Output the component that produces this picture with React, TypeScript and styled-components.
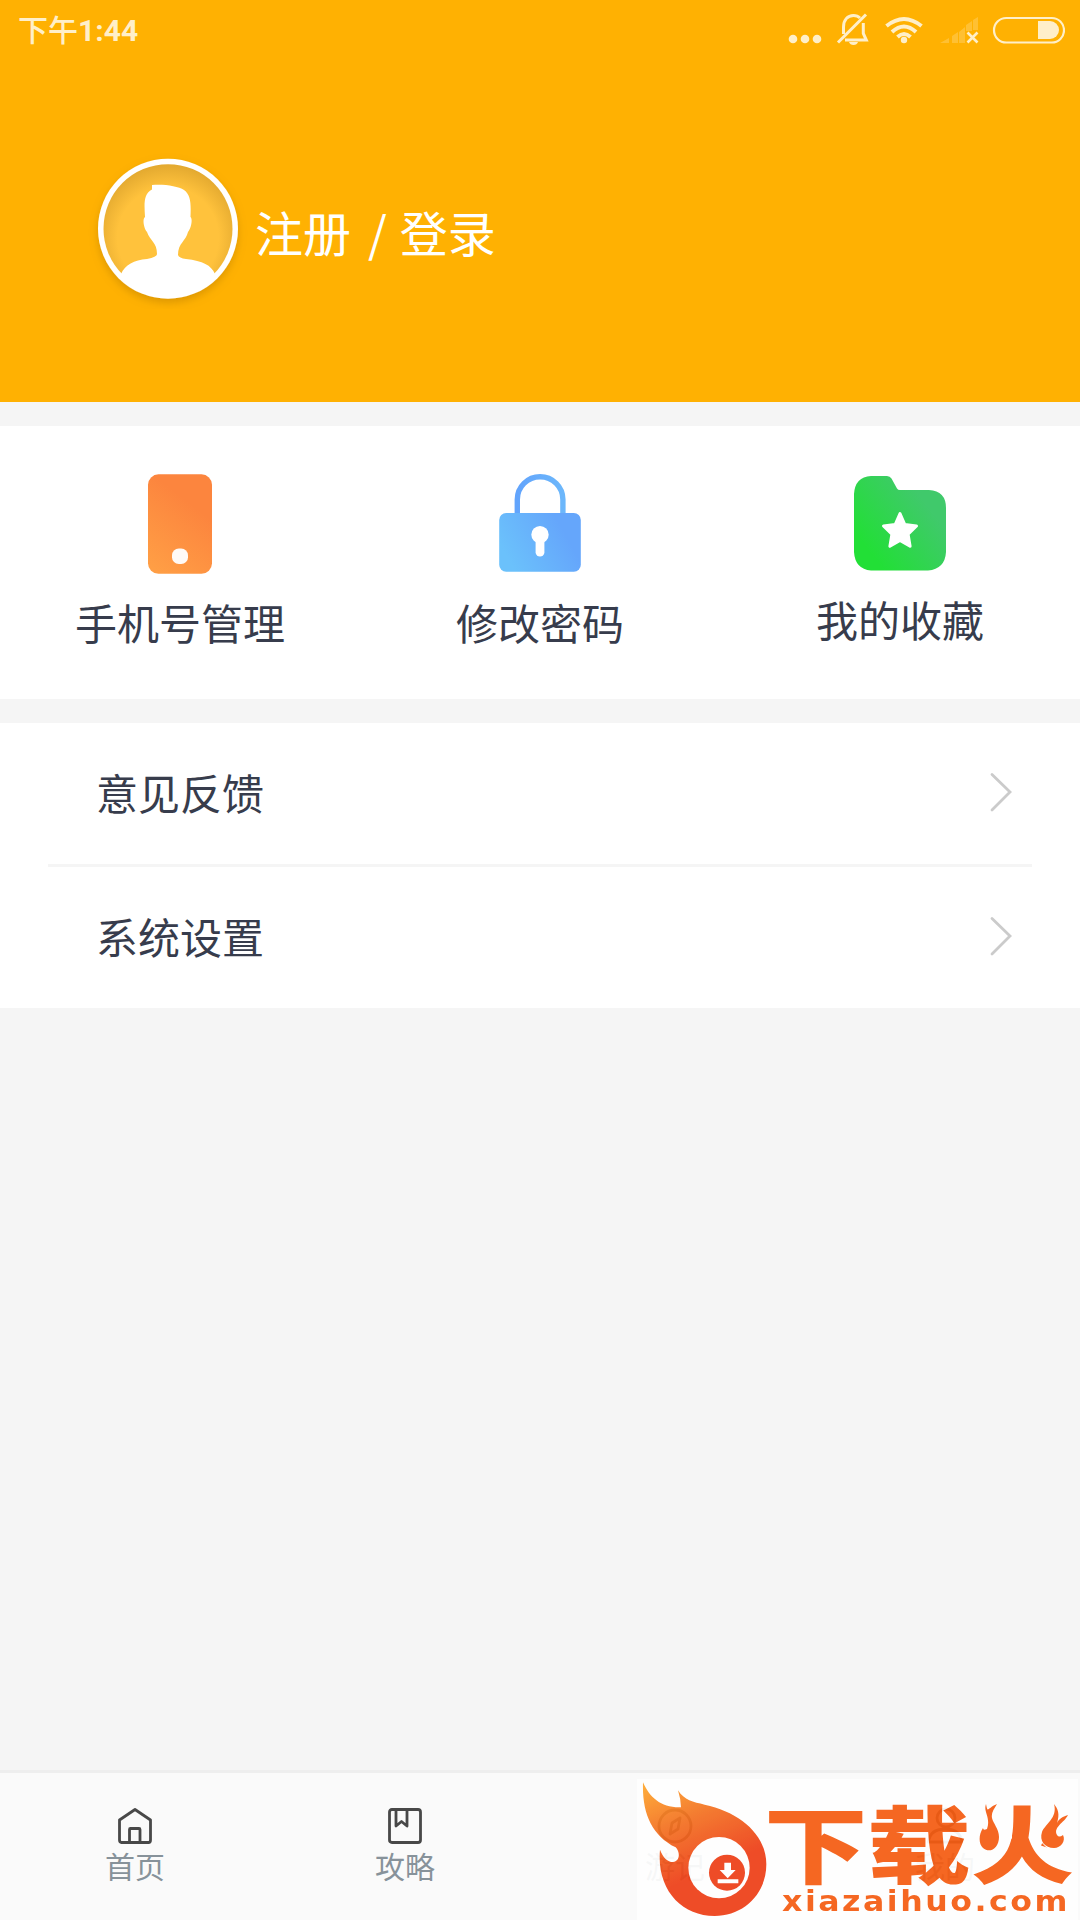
import React from "react";
import styled, { createGlobalStyle } from "styled-components";

const Global = createGlobalStyle`
  * { box-sizing: border-box; }
  body { margin: 0; background: #f5f5f5; font-family: "Noto Sans CJK SC", sans-serif; }
  svg { display: block; flex: none; }
`;

const Screen = styled.div`
  width: 1080px;
  height: 1920px;
  display: flex;
  flex-direction: column;
  background: #f5f5f5;
  overflow: hidden;
`;

const Header = styled.header`
  height: 402px;
  background: #ffb102;
`;

const StatusBar = styled.div`
  height: 60px;
  padding: 0 15px 0 18px;
  display: flex;
  justify-content: space-between;
  align-items: center;
`;

const Clock = styled.span`
  padding-top: 1px;
  font: 500 30px/60px Roboto, "Noto Sans CJK SC", sans-serif;
  color: #ffefc9;
`;

const ClockDigits = styled.span`
  font-weight: 700;
`;

const Profile = styled.div`
  display: flex;
  align-items: center;
  padding: 89px 0 0 88px;
`;

const LoginText = styled.span`
  margin: 4px 0 0 7px;
  font-size: 48px;
  line-height: 70px;
  color: #fff;
`;

const Slash = styled.span`
  margin: 0 13px 0 17px;
`;

const Shortcuts = styled.section`
  display: grid;
  grid-template-columns: repeat(3, 1fr);
  height: 273px;
  margin: 24px 0;
  background: #fff;
`;

const Shortcut = styled.div<{ $gap: number }>`
  display: flex;
  flex-direction: column;
  align-items: center;
  padding-top: 42px;
  gap: ${(p) => p.$gap}px;
  font-size: 42px;
  line-height: 60px;
  color: #373c4c;
`;

const List = styled.section`
  background: #fff;
  padding: 0 48px;
`;

const Row = styled.div<{ $divided?: boolean }>`
  display: flex;
  align-items: center;
  justify-content: space-between;
  height: ${(p) => (p.$divided ? 144 : 141)}px;
  padding: 0 17px 4px 48px;
  border-bottom: ${(p) => (p.$divided ? "3px solid #f5f5f5" : "none")};
  font-size: 42px;
  line-height: 60px;
  color: #373c4c;
`;

const TabBar = styled.nav`
  position: relative;
  margin-top: auto;
  height: 150px;
  border-top: 3px solid #eeeeee;
  background: #fafafa;
  display: grid;
  grid-template-columns: repeat(4, 1fr);
`;

const Tab = styled.div`
  display: flex;
  flex-direction: column;
  align-items: center;
  padding-top: 34px;
  font-size: 30px;
  line-height: 36px;
  color: #87929a;
`;

const Watermark = styled.div`
  position: absolute;
  left: 637px;
  top: 6px;
  width: 441px;
  height: 142px;
  display: flex;
  background: #fff;
  opacity: 0.93;
  color: #f55c12;
  overflow: hidden;
`;

const Brand = styled.div`
  display: flex;
  flex-direction: column;
  width: 311px;
  padding-top: 16px;
`;

const BrandName = styled.div`
  height: 91px;
  width: 252px;
  margin-left: -3px;
  font-size: 84px;
  font-weight: 900;
  line-height: 91px;
  white-space: nowrap;
  transform: scaleX(1.23);
  transform-origin: 0 0;
`;

const Flames = styled.svg`
  position: absolute;
  left: 337px;
  top: 22px;
`;

const Domain = styled.div`
  padding-left: 15px;
  font: bold 29px/30px "DejaVu Sans", sans-serif;
  letter-spacing: 2.3px;
  white-space: nowrap;
  transform: scaleX(1.09);
  transform-origin: 15px 0;
`;

const StatusIcons = () => (
  <svg width="290" height="60" viewBox="775 0 290 60" fill="#ffefc9">
    <circle cx="793" cy="39" r="4.300" />
    <circle cx="805" cy="39" r="4.300" />
    <circle cx="817" cy="39" r="4.300" />
    <g fill="none" stroke="#ffefc9" strokeWidth="3">
      <path d="M843.500 34V27c0-7 4-11.500 10-11.500 2.500 0 5 1 6.500 2.500M863.300 23v10.500l3 6.500H845" />
      <path d="M838 42.500L866 14.500" />
      <path d="M886.500 26Q904 12 921.500 26M892 32Q904 21 916 32M897.500 37Q904 31 910.500 37" strokeWidth="4" />
      <rect x="994" y="18" width="70" height="24.500" rx="12.250" strokeWidth="2.200" />
      <path d="M967.500 32.500l10 10m0-10l-10 10" strokeWidth="2.600" />
    </g>
    <path d="M849 42h9q-1 3-4.500 3t-4.500-3z" />
    <circle cx="904" cy="40" r="3.200" />
    <path d="M940 43l9-5v5zM952 36l6-4v11h-6zM959 32l6-5v16h-6zM966 25l6-4v10h-6zM973 20l5-3v13h-5z" opacity=".25" />
    <path d="M1038 21h12a9 9 0 0 1 0 18h-12z" />
  </svg>
);

const Avatar = () => (
  <svg width="160" height="160" viewBox="88 149 160 160">
    <defs>
      <radialGradient id="face" cx="50%" cy="57%" r="56%">
        <stop offset=".7" stopColor="#ffc23c" />
        <stop offset="1" stopColor="#e4aa30" />
      </radialGradient>
      <clipPath id="disc"><circle cx="168" cy="228.700" r="67" /></clipPath>
      <filter id="shade" x="-20%" y="-20%" width="140%" height="150%">
        <feDropShadow dx="0" dy="4" stdDeviation="4" floodColor="#9a6500" floodOpacity=".35" />
      </filter>
    </defs>
    <circle cx="168" cy="228.700" r="70" fill="#fff" filter="url(#shade)" />
    <circle cx="168" cy="228.700" r="64.500" fill="url(#face)" />
    <path
      clipPath="url(#disc)"
      fill="#fff"
      d="M152 185C164 184 178 186 184 190C191 195 191 204 190.500 217C193 219 191 229 188 232C186 241 178 243 178 255Q179 258 186 259C203 261 211 265 215 274V300H121V274C125 265 134 260 147 259Q157 257 157 254C157 242 150 241 147 232C144 229 142 219 145 217C144 202 144 194 152 189.500Z"
    />
  </svg>
);

const PhoneIcon = () => (
  <svg width="80" height="112" viewBox="140 468 80 112">
    <defs>
      <linearGradient id="ph" x1=".2" y1="1" x2=".7" y2="0">
        <stop stopColor="#ff9e45" /><stop offset=".75" stopColor="#fc853e" />
      </linearGradient>
    </defs>
    <rect x="148" y="474.300" width="64" height="99.500" rx="10.500" fill="url(#ph)" />
    <rect x="172" y="548.500" width="16" height="15.500" rx="6.800" fill="#fffaf6" />
  </svg>
);

const LockIcon = () => (
  <svg width="100" height="112" viewBox="490 468 100 112">
    <defs>
      <linearGradient id="lk" x1="0" y1=".8" x2="1" y2=".4">
        <stop offset=".1" stopColor="#6bc1fb" /><stop offset=".85" stopColor="#65a6fb" />
      </linearGradient>
      <linearGradient id="sh" x1="0" x2="1">
        <stop stopColor="#62a4fc" /><stop offset="1" stopColor="#6cb7fb" />
      </linearGradient>
    </defs>
    <path d="M517.300 514V499.500a22.800 22.800 0 0 1 45.600 0V514" fill="none" stroke="url(#sh)" strokeWidth="5.400" />
    <rect x="499.200" y="513" width="81.600" height="58.700" rx="7" fill="url(#lk)" />
    <circle cx="540" cy="534.700" r="8.700" fill="#fff" />
    <path d="M540 537v15.200" stroke="#fff" strokeWidth="8.800" strokeLinecap="round" />
  </svg>
);

const FolderIcon = () => (
  <svg width="108" height="112" viewBox="846 468 108 112">
    <defs>
      <linearGradient id="fd" x1=".1" y1=".9" x2=".85" y2=".3">
        <stop offset=".12" stopColor="#22df36" /><stop offset=".95" stopColor="#40c96b" />
      </linearGradient>
    </defs>
    <path fill="url(#fd)" d="M871 476H887Q890 476 891.500 478.500L897 488.500Q898 490 900 490H929Q946 491 946 508V552Q945 569 928 570.500H871Q855 569 854 552V494Q855 477 871 476Z" />
    <path fill="#fff" stroke="#fff" strokeWidth="3" strokeLinejoin="round" d="M900 513.500l4.800 11 11.700 1.500-8.400 8.200 2 12L900 540.500l-10.100 5.700 2-12-8.400-8.200 11.700-1.500z" />
  </svg>
);

const Chevron = () => (
  <svg width="26" height="42" viewBox="989 771 26 42">
    <path d="M992 774.500l18 17.500-18 18" fill="none" stroke="#cbcbcb" strokeWidth="2.800" strokeLinecap="round" />
  </svg>
);

const tabIcons = {
  home: <path d="M2.500 13L18 2.500 33.500 13V33Q33.500 35.500 31.500 35.500H4.500Q2.500 35.500 2.500 33ZM12.500 35V22.500Q12.500 21.500 13.500 21.500H22Q23 21.500 23 22.500V35" />,
  book: <path d="M5 2.500H31Q33.500 2.500 33.500 5V33Q33.500 35.500 31 35.500H5Q2.500 35.500 2.500 33V5Q2.500 2.500 5 2.500ZM9 3V19L14.500 14.500 20 19V3" />,
  compass: <><circle cx="18" cy="19" r="16" /><path d="M23 11L15 16 13 27 21 22Z" /></>,
  user: <><circle cx="19" cy="11" r="9" /><path d="M1.500 35Q3 22 18 22T35 35Z" /></>,
};

const TabIcon = ({ name }: { name: keyof typeof tabIcons }) => (
  <svg width="36" height="40" viewBox="0 0 36 40" fill="none" stroke="#484848" strokeWidth="2.800" strokeLinejoin="round">
    {tabIcons[name]}
  </svg>
);

const FireLogo = () => (
  <svg width="130" height="142" viewBox="22 54 390 426">
    <defs>
      <linearGradient id="fire" x1=".1" y1="0" x2=".5" y2="1">
        <stop stopColor="#ffa52d" /><stop offset=".3" stopColor="#f47522" /><stop offset=".72" stopColor="#ee3f18" />
      </linearGradient>
    </defs>
    <path fill="url(#fire)" d="M40 64C60 110 95 141 154 139Q153 113 145 88C164 118 190 123 225 131C330 153 410 220 410 310C410 400 340 465 255 465C155 465 80 385 91 266C100 290 114 303 130 303C150 302 153 275 138 259C65 222 37 155 40 64Z" />
    <circle cx="268" cy="320" r="92" fill="#fff" />
    <circle cx="292" cy="335" r="54" fill="#ee3f18" />
    <path fill="#fff" d="M284 305h20v22h14l-24 25-24-25h14zM264 355h62v12h-62z" />
  </svg>
);

export default function App() {
  return (
    <Screen>
      <Global />
      <Header>
        <StatusBar>
          <Clock>下午<ClockDigits>1:44</ClockDigits></Clock>
          <StatusIcons />
        </StatusBar>
        <Profile>
          <Avatar />
          <LoginText>注册<Slash>/</Slash>登录</LoginText>
        </Profile>
      </Header>
      <Shortcuts>
        <Shortcut $gap={12}><PhoneIcon />手机号管理</Shortcut>
        <Shortcut $gap={12}><LockIcon />修改密码</Shortcut>
        <Shortcut $gap={9}><FolderIcon />我的收藏</Shortcut>
      </Shortcuts>
      <List>
        <Row $divided>意见反馈<Chevron /></Row>
        <Row>系统设置<Chevron /></Row>
      </List>
      <TabBar>
        <Tab><TabIcon name="home" />首页</Tab>
        <Tab><TabIcon name="book" />攻略</Tab>
        <Tab><TabIcon name="compass" />游记</Tab>
        <Tab><TabIcon name="user" />我的</Tab>
        <Watermark>
          <FireLogo />
          <Brand>
            <BrandName>下载火</BrandName>
            <Domain>xiazaihuo.com</Domain>
          </Brand>
          <Flames width="104" height="52" viewBox="974 1801 104 52">
            <path fill="#fff" d="M974 1801H1012V1838L1000 1853H974ZM1037 1801H1078V1853H1052L1037 1838Z" />
            <path fill="#f55c12" d="M986 1804C983 1812 991 1817 987 1829Q983 1831 983 1828C978 1836 979 1844 983 1848C990 1854 999 1848 999 1837C999 1829 993 1823 992 1818C991 1813 994 1809 997 1804C987 1808 988 1814 986 1804Z" />
            <path fill="#f55c12" d="M1054 1804C1058 1818 1045 1824 1042 1832C1039 1841 1045 1848 1054 1848C1061 1848 1066 1841 1063 1835Q1059 1838 1057 1835C1053 1827 1064 1823 1068 1815C1062 1817 1059 1819 1057 1823C1060 1814 1058 1809 1054 1804Z" />
          </Flames>
        </Watermark>
      </TabBar>
    </Screen>
  );
}
